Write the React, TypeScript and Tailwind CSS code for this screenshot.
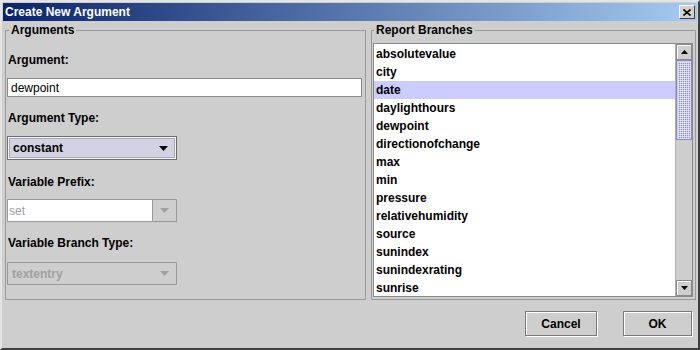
import React from "react";

const items = [
  "absolutevalue",
  "city",
  "date",
  "daylighthours",
  "dewpoint",
  "directionofchange",
  "max",
  "min",
  "pressure",
  "relativehumidity",
  "source",
  "sunindex",
  "sunindexrating",
  "sunrise",
];

function Down({ color = "#000", w = 9, h = 5 }: { color?: string; w?: number; h?: number }) {
  return (
    <svg width={w} height={h} viewBox={`0 0 ${w} ${h}`}>
      <polygon points={`0,0 ${w},0 ${w / 2},${h}`} fill={color} />
    </svg>
  );
}

function Up({ color = "#000", w = 7, h = 4 }: { color?: string; w?: number; h?: number }) {
  return (
    <svg width={w} height={h} viewBox={`0 0 ${w} ${h}`}>
      <polygon points={`0,${h} ${w},${h} ${w / 2},0`} fill={color} />
    </svg>
  );
}

export default function App() {
  return (
    <div className="w-[700px] h-[350px] bg-[#cecece] font-['Liberation_Sans',Arial,sans-serif] text-[12px] text-black border-2 border-t-[#e4e4e4] border-l-[#e4e4e4] border-r-[#404040] border-b-[#404040] p-[1px] flex flex-col overflow-hidden select-none">
      {/* title bar */}
      <div className="h-[18px] shrink-0 flex items-center justify-between bg-[linear-gradient(to_right,#0a246a,#a6caf0)] pl-[2px] pr-[2px]">
        <span className="text-white font-bold leading-[14px]">Create New Argument</span>
        <div className="w-[16px] h-[14px] bg-[#d4d0c8] border border-t-white border-l-white border-r-[#404040] border-b-[#404040] flex items-center justify-center">
          <svg width="8" height="7" viewBox="0 0 8 7">
            <path d="M0.5 0.5 L7.5 6.5 M7.5 0.5 L0.5 6.5" stroke="#000" strokeWidth="1.6" />
          </svg>
        </div>
      </div>

      {/* body */}
      <div className="flex-1 flex flex-col pl-[2px] pt-[2px]">
        <div className="flex gap-[5px]">
          {/* Arguments group */}
          <fieldset className="w-[361px] h-[277px] border border-[#9a9a9a] px-0 pb-0">
            <legend className="ml-[3px] px-[2px] font-bold leading-[14px]">Arguments</legend>
            <div className="mt-[16px] pl-[2px] font-bold leading-[14px]">Argument:</div>
            <div className="mt-[11px] ml-[1px] w-[355px] h-[19px] bg-white border border-[#8a8a8a] flex items-center pl-[3px] leading-[14px]">
              dewpoint
            </div>
            <div className="mt-[14px] pl-[2px] font-bold leading-[14px]">Argument Type:</div>
            <div className="mt-[11px] ml-[1px] w-[170px] h-[24px] border border-[#6e6e6e] bg-[#f4f4f8] p-[1px]">
              <div className="w-full h-full bg-[#d2d2e2] border border-[#a8a8b8] flex items-center justify-between pl-[3px] pr-[6px]">
                <span className="font-bold leading-[14px]">constant</span>
                <Down />
              </div>
            </div>
            <div className="mt-[15px] pl-[2px] font-bold leading-[14px]">Variable Prefix:</div>
            <div className="mt-[10px] ml-[1px] w-[170px] h-[23px] border border-[#9a9a9a] flex">
              <div className="flex-1 bg-white flex items-center pl-[1px] text-[#9a9a9a] leading-[14px]">set</div>
              <div className="w-[24px] border-l border-[#9a9a9a] bg-[#cecece] flex items-center justify-center">
                <Down color="#a0a0a0" />
              </div>
            </div>
            <div className="mt-[14px] pl-[2px] font-bold leading-[14px]">Variable Branch Type:</div>
            <div className="mt-[12px] ml-[1px] w-[170px] h-[23px] border border-[#9a9a9a] flex items-center justify-between pl-[4px] pr-[7px]">
              <span className="font-bold text-[#a0a0a0] leading-[14px]">textentry</span>
              <Down color="#a0a0a0" />
            </div>
          </fieldset>

          {/* Report Branches group */}
          <fieldset className="w-[325px] h-[277px] border border-[#9a9a9a] px-0 pb-0">
            <legend className="ml-[2px] px-[2px] font-bold leading-[14px]">Report Branches</legend>
            <div className="mt-[6px] ml-[1px] w-[320px] h-[254px] border border-[#8a8a8a] flex overflow-hidden">
              <div className="flex-1 bg-white pt-[1px] overflow-hidden">
                {items.map((it) => (
                  <div
                    key={it}
                    className={`h-[18px] flex items-center pl-[2px] font-bold leading-[14px] ${
                      it === "date" ? "bg-[#ccccff]" : ""
                    }`}
                  >
                    {it}
                  </div>
                ))}
              </div>
              <div className="w-[17px] flex flex-col bg-[#cecece] border-l border-[#b0b0b0]">
                <div className="h-[16px] shrink-0 border border-[#8a8a8a] shadow-[inset_1px_1px_0_#fff] flex items-center justify-center">
                  <Up />
                </div>
                <div className="h-[80px] shrink-0 border border-[#8888c0] bg-[#ccccff] overflow-hidden">
                  <svg width="100%" height="100%">
                    <defs>
                      <pattern id="bumps" width="2" height="2" patternUnits="userSpaceOnUse">
                        <rect x="0" y="0" width="1" height="1" fill="#9090c8" />
                        <rect x="1" y="1" width="1" height="1" fill="#e8e8ff" />
                      </pattern>
                    </defs>
                    <rect x="1" y="1" width="100%" height="100%" fill="url(#bumps)" />
                  </svg>
                </div>
                <div className="flex-1" />
                <div className="h-[16px] shrink-0 border border-[#8a8a8a] shadow-[inset_1px_1px_0_#fff] flex items-center justify-center">
                  <Down w={7} h={4} />
                </div>
              </div>
            </div>
          </fieldset>
        </div>

        {/* buttons */}
        <div className="mt-[11px] flex justify-end gap-[26px] pr-[5px]">
          <button className="w-[72px] h-[25px] border border-[#7a7a7a] shadow-[inset_1px_1px_0_#fff,1px_1px_0_#fff] font-bold leading-[14px] bg-[#cecece]">
            Cancel
          </button>
          <button className="w-[69px] h-[25px] border border-[#7a7a7a] shadow-[inset_1px_1px_0_#fff,1px_1px_0_#fff] font-bold leading-[14px] bg-[#cecece]">
            OK
          </button>
        </div>
      </div>
    </div>
  );
}
